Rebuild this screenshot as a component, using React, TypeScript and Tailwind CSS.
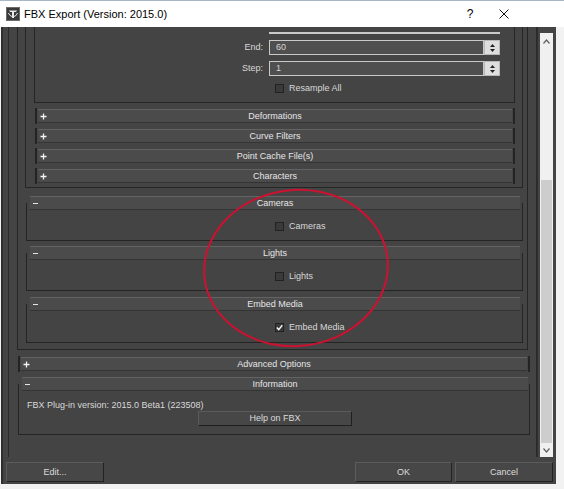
import React from "react";

function Logo() {
  return (
    <svg width="14" height="14" viewBox="0 0 14 14">
      <rect x="0.5" y="0.5" width="13" height="13" fill="#3a3a3a" stroke="#6b6b6b" />
      <path d="M3 3.5 L11 3.5 L10 5 L8 5 L8 11 L6 11 L6 5 L4 5 Z" fill="#e8e8e8" />
      <path d="M2.5 6 Q3.5 9 6 9.5 M11.5 6 Q10.5 9 8 9.5" stroke="#e8e8e8" strokeWidth="1" fill="none" />
    </svg>
  );
}

function Sym({ open }: { open: boolean }) {
  return open ? (
    <span className="block w-[5px] h-[1px] bg-[#e4e4e4]" />
  ) : (
    <svg width="7" height="7" viewBox="0 0 7 7">
      <path d="M3.5 0.5v6M0.5 3.5h6" stroke="#f2f2f2" strokeWidth="1.3" />
    </svg>
  );
}

function Header({ title, open }: { title: string; open: boolean }) {
  return (
    <div className="h-[14px] bg-[#4b4b4b] border-t border-t-[#636363] border-b border-b-[#343434] grid grid-cols-[10px_1fr_10px] items-center">
      <div className="flex justify-center">
        <Sym open={open} />
      </div>
      <div className="text-center leading-none text-[#e6e6e6]">{title}</div>
      <div />
    </div>
  );
}

function Collapsed({ title, className }: { title: string; className: string }) {
  return (
    <div className={`border-x-2 border-[#242424] px-[1px] py-[1px] ${className}`}>
      <Header title={title} open={false} />
    </div>
  );
}

function Check({ checked }: { checked?: boolean }) {
  return (
    <div className="w-[9px] h-[9px] bg-[#3a3a3a] border border-[#222] flex items-center justify-center">
      {checked && (
        <svg width="7" height="7" viewBox="0 0 7 7">
          <path d="M0.8 3.6 L2.7 5.6 L6.3 1.2" stroke="#f4f4f4" strokeWidth="1.4" fill="none" />
        </svg>
      )}
    </div>
  );
}

function CheckRow({ label, checked, pl }: { label: string; checked?: boolean; pl: string }) {
  return (
    <div className={`flex items-center h-[9px] ${pl}`}>
      <Check checked={checked} />
      <span className="ml-[5px] leading-none text-[#d8d8d8]">{label}</span>
    </div>
  );
}

function Spinner() {
  return (
    <div className="w-[16px] h-[15px] bg-[#dedede] border border-[#b8b8b8] flex flex-col items-center justify-center gap-[2px]">
      <svg width="5" height="3" viewBox="0 0 5 3">
        <path d="M0 3 L2.5 0 L5 3 Z" fill="#222" />
      </svg>
      <svg width="5" height="3" viewBox="0 0 5 3">
        <path d="M0 0 L2.5 3 L5 0 Z" fill="#222" />
      </svg>
    </div>
  );
}

function NumRow({ label, value, className }: { label: string; value: string; className: string }) {
  return (
    <div className={`flex items-center h-[15px] ${className}`}>
      <div className="w-[234px] text-right pr-[6px] leading-none text-[#d8d8d8]">{label}</div>
      <div className="w-[215px] h-[15px] bg-[#4f4f4f] border border-[#c9c9c9] flex items-center pl-[6px] leading-none text-[#d4d4d4]">
        {value}
      </div>
      <Spinner />
    </div>
  );
}

function Expanded({
  title,
  className,
  children,
  hx,
}: {
  title: string;
  className: string;
  children: React.ReactNode;
  hx: string;
}) {
  return (
    <div className={`border-x border-b border-[#242424] ${className}`}>
      <div className={`-mt-[7px] ${hx}`}>
        <Header title={title} open />
      </div>
      {children}
    </div>
  );
}

function Btn({ label, className }: { label: string; className: string }) {
  return (
    <div
      className={`h-[20px] bg-[#474747] border border-t-[#5c5c5c] border-l-[#5c5c5c] border-b-[#222] border-r-[#222] flex items-center justify-center leading-none text-[#dcdcdc] ${className}`}
    >
      {label}
    </div>
  );
}

export default function App() {
  return (
    <div className="relative w-[564px] h-[489px] bg-[#f2f2f2] overflow-hidden font-['Liberation_Sans',Arial,sans-serif] text-[9px] text-[#dcdcdc]">
      {/* Title bar */}
      <div className="h-[27px] bg-white flex items-center border-t border-[#a8b6c6]">
        <div className="ml-[6px] w-[14px] h-[14px]">
          <Logo />
        </div>
        <div className="ml-[4px] text-[11px] leading-none text-black">FBX Export (Version: 2015.0)</div>
        <div className="ml-auto w-[16px] text-center text-[12px] leading-none text-black">?</div>
        <div className="ml-[20px] mr-[54px] w-[12px] flex justify-center">
          <svg width="10" height="10" viewBox="0 0 10 10">
            <path d="M0.5 0.5 L9.5 9.5 M9.5 0.5 L0.5 9.5" stroke="#111" strokeWidth="1" />
          </svg>
        </div>
      </div>

      {/* Body */}
      <div className="ml-[1px] w-[555px] h-[457px] bg-[#444444] flex flex-col border-l-2 border-[#2e2e2e]">
        <div className="flex h-[430px]">
          {/* scroll viewport */}
          <div className="ml-[5px] w-[529px] h-full overflow-hidden border-x border-[#2a2a2a] flex flex-col">
            {/* Include panel */}
            <div className="mx-[8px] border-x border-b border-[#262626] pb-[6px] flex flex-col">
              {/* Animation panel */}
              <div className="ml-[7px] mr-[4px] border-x border-b border-[#262626] pb-[3px] flex flex-col">
                {/* Bake animation group */}
                <div className="ml-[8px] mr-[7px] border-x border-b border-[#262626] pb-[9px] flex flex-col">
                  {/* bottom edge of the Start field, scrolled out of view */}
                  <div className="h-[7px] flex">
                    <div className="ml-[234px] w-[231px] border-b-2 border-[#c9c9c9]" />
                  </div>
                  <NumRow label="End:" value="60" className="mt-[6px]" />
                  <NumRow label="Step:" value="1" className="mt-[6px]" />
                  <div className="mt-[8px]">
                    <CheckRow label="Resample All" pl="pl-[240px]" />
                  </div>
                </div>
                <Collapsed title="Deformations" className="ml-[9px] mr-[7px] mt-[5px]" />
                <Collapsed title="Curve Filters" className="ml-[9px] mr-[7px] mt-[4px]" />
                <Collapsed title="Point Cache File(s)" className="ml-[9px] mr-[7px] mt-[4px]" />
                <Collapsed title="Characters" className="ml-[9px] mr-[7px] mt-[4px]" />
              </div>

              <Expanded title="Cameras" className="ml-[8px] mr-[4px] mt-[15px] pb-[9px]" hx="ml-[3px] mr-[2px]">
                <div className="pt-[12px]">
                  <CheckRow label="Cameras" pl="pl-[248px]" />
                </div>
              </Expanded>
              <Expanded title="Lights" className="ml-[8px] mr-[4px] mt-[12px] pb-[9px]" hx="ml-[3px] mr-[2px]">
                <div className="pt-[12px]">
                  <CheckRow label="Lights" pl="pl-[248px]" />
                </div>
              </Expanded>
              <Expanded title="Embed Media" className="ml-[8px] mr-[4px] mt-[13px] pb-[10px]" hx="ml-[3px] mr-[2px]">
                <div className="pt-[12px]">
                  <CheckRow label="Embed Media" checked pl="pl-[248px]" />
                </div>
              </Expanded>
            </div>

            <Collapsed title="Advanced Options" className="ml-[9px] mr-[6px] mt-[6px]" />

            <Expanded title="Information" className="ml-[9px] mr-[6px] mt-[12px] pb-[8px]" hx="ml-[3px] mr-[1px]">
              <div className="pt-[9px] pl-[8px] h-[20px] leading-[11px] text-[#d8d8d8]">
                FBX Plug-in version: 2015.0 Beta1 (223508)
              </div>
              <div className="pl-[179px]">
                <div className="w-[154px] h-[15px] bg-[#474747] border border-t-[#5a5a5a] border-l-[#5a5a5a] border-b-[#202020] border-r-[#202020] flex items-center justify-center leading-none text-[#dcdcdc]">
                  Help on FBX
                </div>
              </div>
            </Expanded>
          </div>

          <div className="w-[3px] border-l border-[#2e2e2e]" />

          {/* scrollbar */}
          <div className="w-[13px] mt-[6px] h-[424px] bg-[#f0f0f0] flex flex-col">
            <div className="h-[17px] flex items-center justify-center">
              <svg width="7" height="5" viewBox="0 0 7 5">
                <path d="M0.5 4.5 L3.5 1 L6.5 4.5" stroke="#606060" strokeWidth="1.2" fill="none" />
              </svg>
            </div>
            <div className="flex-1 flex flex-col">
              <div className="h-[130px]" />
              <div className="flex-1 mx-[1px] bg-[#cdcdcd]" />
            </div>
            <div className="h-[14px] flex items-center justify-center">
              <svg width="7" height="5" viewBox="0 0 7 5">
                <path d="M0.5 0.5 L3.5 4 L6.5 0.5" stroke="#606060" strokeWidth="1.2" fill="none" />
              </svg>
            </div>
          </div>
        </div>

        {/* button row */}
        <div className="flex-1 flex items-start pt-[5px] pr-[3px]">
          <Btn label="Edit..." className="ml-[3px] w-[98px]" />
          <Btn label="OK" className="ml-auto w-[97px]" />
          <Btn label="Cancel" className="ml-[3px] w-[98px]" />
        </div>
      </div>

      {/* red annotation ellipse */}
      <svg className="absolute inset-0 pointer-events-none" width="564" height="489" viewBox="0 0 564 489">
        <ellipse
          cx="296"
          cy="268"
          rx="92"
          ry="78"
          transform="rotate(-6 296 268)"
          fill="none"
          stroke="#cc1230"
          strokeWidth="2"
        />
      </svg>
    </div>
  );
}
